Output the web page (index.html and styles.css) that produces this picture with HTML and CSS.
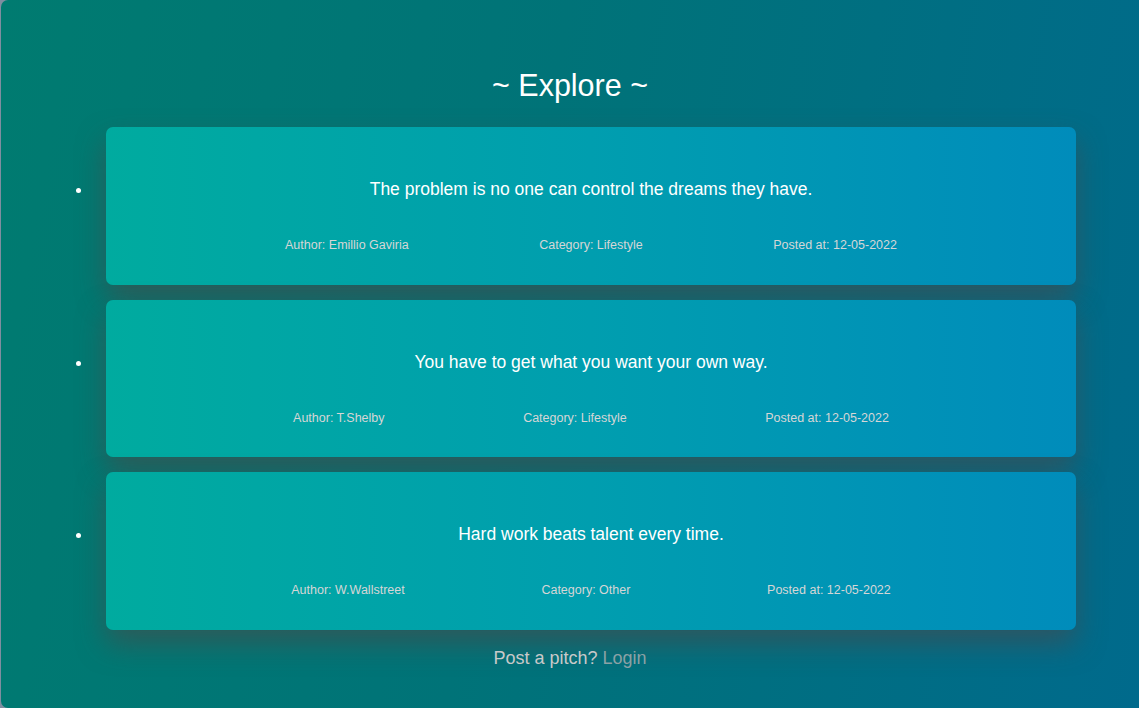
FILE: index.html
```html
<!DOCTYPE html>
<html lang="en">
<head>
<meta charset="utf-8">
<title>Explore</title>
<link rel="stylesheet" href="styles.css">
</head>
<body>
<div class="page">
  <h1 class="title">~ Explore ~</h1>
  <ul class="pitches">
    <li class="pitch-item">
      <div class="card">
        <p class="quote">The problem is no one can control the dreams they have.</p>
        <div class="meta">
          <span>Author: Emillio Gaviria</span>
          <span>Category: Lifestyle</span>
          <span>Posted at: 12-05-2022</span>
        </div>
      </div>
    </li>
    <li class="pitch-item">
      <div class="card">
        <p class="quote">You have to get what you want your own way.</p>
        <div class="meta">
          <span>Author: T.Shelby</span>
          <span>Category: Lifestyle</span>
          <span>Posted at: 12-05-2022</span>
        </div>
      </div>
    </li>
    <li class="pitch-item">
      <div class="card">
        <p class="quote">Hard work beats talent every time.</p>
        <div class="meta">
          <span>Author: W.Wallstreet</span>
          <span>Category: Other</span>
          <span>Posted at: 12-05-2022</span>
        </div>
      </div>
    </li>
  </ul>
  <p class="footer">Post a pitch? <a class="login" href="#">Login</a></p>
</div>
</body>
</html>
```

FILE: styles.css
```css
html, body {
  margin: 0;
  padding: 0;
  height: 100%;
  background: #7f8ea0;
}

body {
  font-family: "Liberation Sans", Arial, Helvetica, sans-serif;
  color: #fff;
}

.page {
  box-sizing: border-box;
  height: 708px;
  margin-left: 1px;
  border-radius: 7px 0 0 7px;
  background: linear-gradient(100deg, #007b70 0%, #007378 45%, #006a8c 100%);
  padding-top: 67px;
  overflow: hidden;
}

.title {
  margin: 0;
  text-align: center;
  font-size: 30.5px;
  font-weight: 400;
  line-height: 36px;
}

.pitches {
  list-style: disc;
  margin: 24px 0 0 0;
  padding: 0 63px 0 91px;
  display: flex;
  flex-direction: column;
  gap: 15px;
}

.pitch-item {
  padding-left: 14px;
  font-size: 16px;
}

.card {
  box-sizing: border-box;
  height: 157.5px;
  border-radius: 7px;
  background: linear-gradient(90deg, #00ab9f 0%, #009eaf 50%, #008cbb 100%);
  box-shadow: 0 14px 28px rgba(80, 70, 70, 0.55);
  padding-top: 51px;
}

.quote {
  margin: 0;
  text-align: center;
  font-size: 17.5px;
  line-height: 23px;
}

.meta {
  width: 90%;
  margin: 37px auto 0;
  display: flex;
  justify-content: space-evenly;
  font-size: 12.5px;
  line-height: 14px;
  color: #d6d6d6;
}

.footer {
  margin: 17px 0 0;
  text-align: center;
  font-size: 18px;
  line-height: 22px;
  color: #c9c9c9;
}

.login {
  color: #8ba1a5;
  text-decoration: none;
}
```
